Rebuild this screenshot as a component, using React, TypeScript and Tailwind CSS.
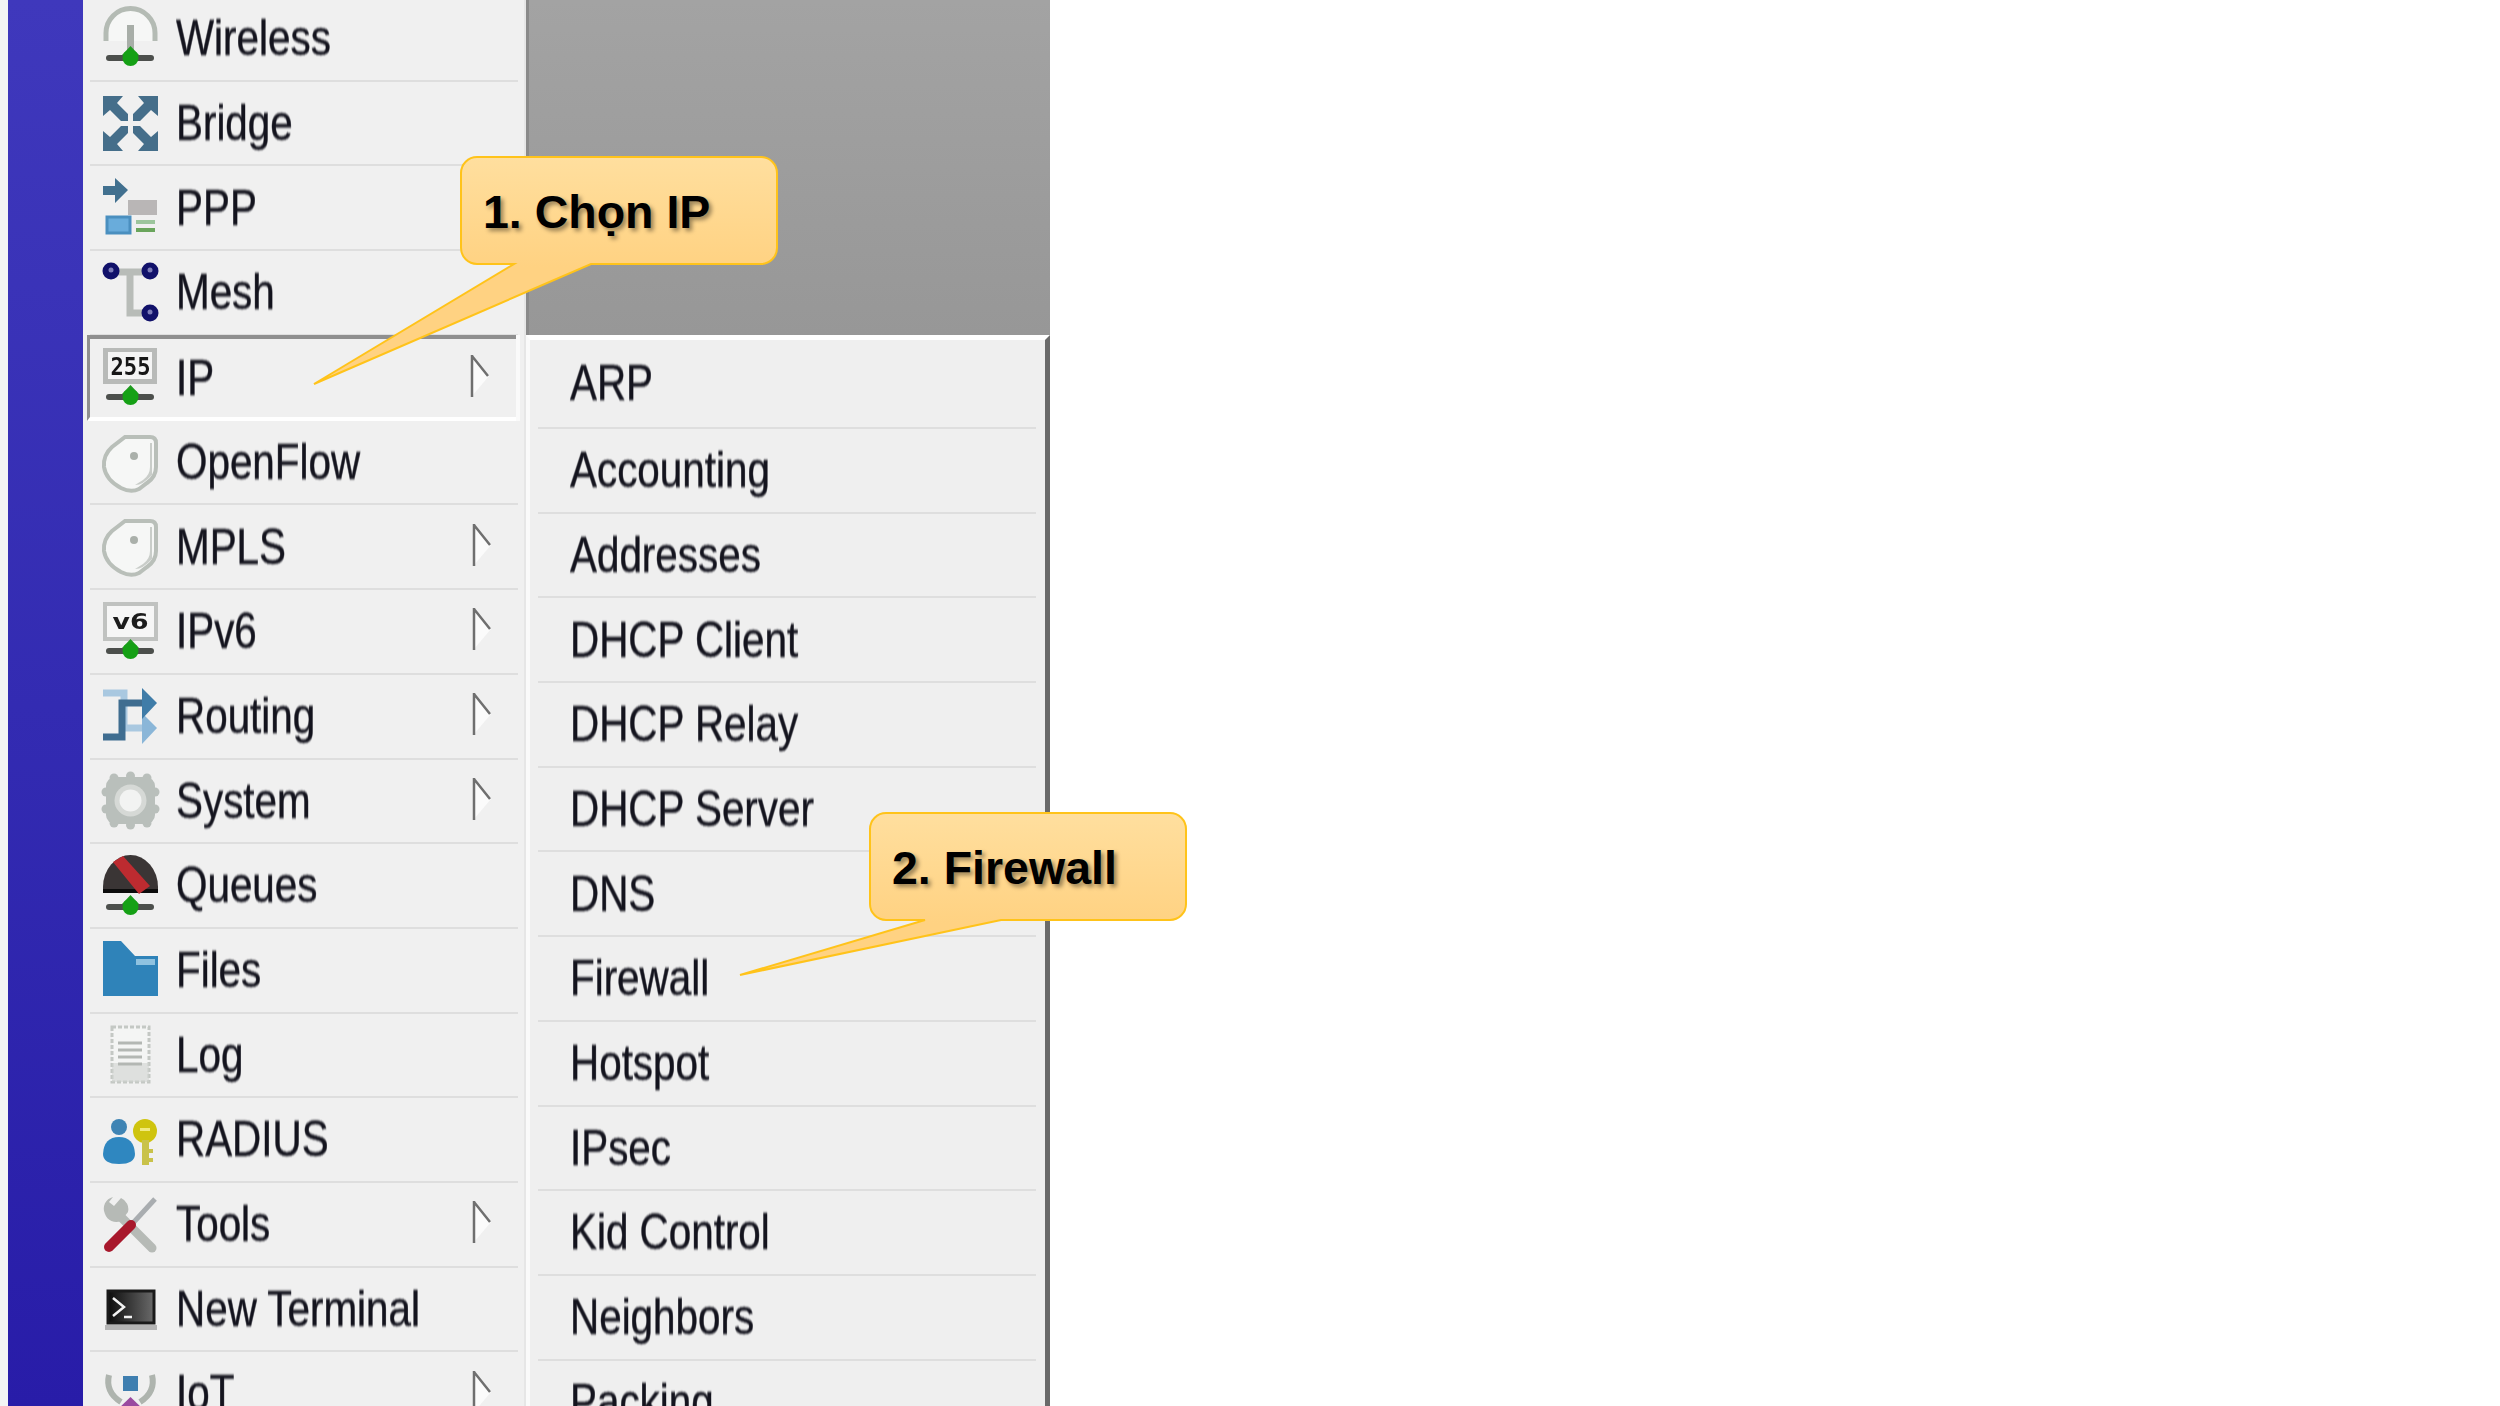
import type { ReactNode } from "react";

// shared little "network" foot under several of the icons
function NetFoot({ y }: { y: number }) {
  return (
    <>
      <rect x="3" y={y - 3} width="48" height="6" rx="3" fill="#2f332f" opacity="0.85" />
      <path d={`M27.5 ${y - 12} L36 ${y - 3} L19 ${y - 3} Z`} fill="#1f9a1f" />
      <circle cx="27.5" cy={y} r="8" fill="#15a015" />
    </>
  );
}

function Icon({ children }: { children: ReactNode }) {
  return (
    <svg viewBox="0 0 55 55" className="w-[55px] h-[55px] shrink-0 overflow-visible blur-[0.6px]">
      {children}
    </svg>
  );
}

const shield = "M22 2 H47 Q53 2 53 8 V32 Q53 42 44 48 L36 54 Q28 58 18 53 Q3 45 1 32 Q0 20 9 12 Z";

function ShieldIcon() {
  return (
    <Icon>
      <path d={shield} fill="#f6f7f6" stroke="#b9bfb9" strokeWidth="4" />
      <path d="M47 8 V32 Q47 40 40 45 L32 50 Q40 50 49 40 V8 Z" fill="#c9cdc9" />
      <circle cx="31" cy="21" r="4" fill="#aab0aa" />
    </Icon>
  );
}

function Arrow() {
  return <polygon points="0,0 20,0 14,7 25,18 25,25 18,25 7,14 0,20" fill="#456e8a" />;
}

const gearBumps = [
  [11, 5],
  [27.5, 3],
  [44, 5],
  [11, 50],
  [27.5, 52],
  [44, 50],
  [3, 19],
  [3, 36],
  [52, 19],
  [52, 36],
];

const icons: Record<string, ReactNode> = {
  Wireless: (
    <Icon>
      <path d="M3 30 V22 A24.5 24.5 0 0 1 52 22 V30" fill="#f6f7f6" stroke="#b4bbb4" strokeWidth="5" />
      <rect x="24" y="14" width="7" height="30" fill="#a8aea8" />
      <NetFoot y={47} />
    </Icon>
  ),
  Bridge: (
    <Icon>
      <Arrow />
      <g transform="translate(55 0) scale(-1 1)">
        <Arrow />
      </g>
      <g transform="translate(0 55) scale(1 -1)">
        <Arrow />
      </g>
      <g transform="translate(55 55) scale(-1 -1)">
        <Arrow />
      </g>
    </Icon>
  ),
  PPP: (
    <Icon>
      <path d="M0 6 H12 V-2 L25 10 L12 23 V15 H0 Z" fill="#41708f" />
      <rect x="4" y="37" width="23" height="16" fill="#69acdb" stroke="#4a8fbf" strokeWidth="3" />
      <rect x="25" y="20" width="29" height="15" fill="#b9b6b6" />
      <rect x="33" y="40" width="19" height="4" fill="#9cc59c" />
      <rect x="33" y="48" width="19" height="4" fill="#6aa55c" />
    </Icon>
  ),
  Mesh: (
    <Icon>
      <path d="M8 7 H47 M27 7 V48 H47" fill="none" stroke="#b8bcb8" strokeWidth="7" />
      <circle cx="8" cy="6" r="8.5" fill="#11116a" />
      <circle cx="47" cy="6" r="8.5" fill="#11116a" />
      <circle cx="47" cy="48" r="8.5" fill="#11116a" />
      <circle cx="8" cy="5" r="2.5" fill="#7c7cb8" />
      <circle cx="47" cy="5" r="2.5" fill="#7c7cb8" />
      <circle cx="47" cy="47" r="2.5" fill="#7c7cb8" />
    </Icon>
  ),
  IP: (
    <Icon>
      <rect x="0" y="-2" width="54" height="36" fill="#b8bab8" />
      <rect x="5" y="2" width="44" height="27" fill="#f4f4f4" />
      <text x="27.5" y="25" textAnchor="middle" fontSize="24" fontWeight="700" fontFamily="'DejaVu Sans Mono', monospace" fill="#161616" textLength="40" lengthAdjust="spacingAndGlyphs">
        255
      </text>
      <NetFoot y={47} />
    </Icon>
  ),
  OpenFlow: <ShieldIcon />,
  MPLS: <ShieldIcon />,
  IPv6: (
    <Icon>
      <rect x="2" y="0" width="51" height="35" fill="#f6f6f6" stroke="#c0c2c0" strokeWidth="4" />
      <text x="27.5" y="25" textAnchor="middle" fontSize="22" fontWeight="700" fontFamily="'DejaVu Sans', sans-serif" fill="#1c1c1c" textLength="36" lengthAdjust="spacingAndGlyphs">
        v6
      </text>
      <NetFoot y={47} />
    </Icon>
  ),
  Routing: (
    <Icon>
      <path d="M0 4 H21 V39 H42" fill="none" stroke="#a9c8e0" strokeWidth="7" />
      <path d="M39 24 L54 39 L39 55 Z" fill="#8ab6d8" />
      <path d="M0 48 H19 V14 H42" fill="none" stroke="#3f6d90" strokeWidth="7" />
      <path d="M39 -1 L54 14 L39 30 Z" fill="#3f7ca8" />
    </Icon>
  ),
  System: (
    <Icon>
      {gearBumps.map(([cx, cy]) => (
        <circle key={`${cx}-${cy}`} cx={cx} cy={cy} r="4.5" fill="#b9bfbb" />
      ))}
      <rect x="3" y="4" width="49" height="47" rx="9" fill="#b9bfbb" />
      <circle cx="27.5" cy="27.5" r="16" fill="#d6d9d6" />
      <circle cx="27.5" cy="27.5" r="11" fill="#f2f3f2" />
    </Icon>
  ),
  Queues: (
    <Icon>
      <path d="M0 35 V29 A27.5 32 0 0 1 55 29 V35 Z" fill="#3a3535" />
      <rect x="0" y="31" width="55" height="4" fill="#0c0c0c" />
      <path d="M10 4 L20 -2 L47 28 L36 36 Z" fill="#bd2b30" />
      <NetFoot y={49} />
    </Icon>
  ),
  Files: (
    <Icon>
      <path d="M0 -2 H18 L32 13 H55 V53 H0 Z" fill="#2f83b9" />
      <path d="M33 16 H52 V22 H33 Z" fill="#8fc2e0" />
    </Icon>
  ),
  Log: (
    <Icon>
      <path d="M9 0 H46 V55 H9 Z" fill="#f4f5f4" stroke="#c4c8c4" strokeWidth="3" strokeDasharray="4 2" />
      <path d="M9 36 H46 V55 H9 Z" fill="#cfd2cf" opacity="0.6" />
      <path d="M15 16 H39 M15 23 H39 M15 30 H39 M15 37 H39" stroke="#b3b7b3" strokeWidth="3" />
    </Icon>
  ),
  RADIUS: (
    <Icon>
      <circle cx="16" cy="15" r="8" fill="#3f84b4" />
      <path d="M0 42 Q1 25 16 25 Q31 25 32 42 Q32 52 16 52 Q0 52 0 42 Z" fill="#2f87c0" />
      <circle cx="42" cy="19" r="12" fill="#cfc40f" />
      <rect x="37" y="16" width="10" height="3" fill="#f0ea80" />
      <path d="M39 28 H46 V53 H39 Z M46 37 H50 V41 H46 Z M46 46 H50 V50 H46 Z" fill="#c9c24a" />
    </Icon>
  ),
  Tools: (
    <Icon>
      <path d="M16 18 L49 51" stroke="#b6bab6" strokeWidth="9" strokeLinecap="round" />
      <path d="M10 0 A12 12 0 0 0 2 17 A12 12 0 0 0 18 24 L25 15 A12 12 0 0 0 18 1 L11 9 L6 5 Z" fill="#b6bab6" />
      <path d="M52 2 L30 26" stroke="#a9adb0" strokeWidth="5" />
      <path d="M28 28 L6 50" stroke="#a8182c" strokeWidth="10" strokeLinecap="round" />
    </Icon>
  ),
  "New Terminal": (
    <Icon>
      <defs>
        <linearGradient id="term-screen" x1="0" y1="0" x2="1" y2="0">
          <stop offset="0" stopColor="#0c0c0c" />
          <stop offset="1" stopColor="#6a6a6a" />
        </linearGradient>
      </defs>
      <rect x="5" y="10" width="46" height="32" fill="url(#term-screen)" stroke="#1a1a1a" strokeWidth="3" />
      <rect x="2" y="44" width="52" height="5" fill="#b4b4b4" />
      <path d="M10 17 L21 26 L10 35 M21 36 H29" fill="none" stroke="#f2f2f2" strokeWidth="2.5" />
    </Icon>
  ),
  IoT: (
    <Icon>
      <path d="M6 9 Q2 26 18 36 M49 9 Q53 26 37 36" fill="none" stroke="#aeb4ae" strokeWidth="6" />
      <rect x="20" y="10" width="15" height="15" fill="#3f7fb0" />
      <path d="M27.5 31 L42 45 L27.5 59 L13 45 Z" fill="#9a4aa0" />
    </Icon>
  ),
};

const mainItems = [
  { name: "Wireless" },
  { name: "Bridge" },
  { name: "PPP" },
  { name: "Mesh" },
  { name: "IP", sub: true, active: true },
  { name: "OpenFlow" },
  { name: "MPLS", sub: true },
  { name: "IPv6", sub: true },
  { name: "Routing", sub: true },
  { name: "System", sub: true },
  { name: "Queues" },
  { name: "Files" },
  { name: "Log" },
  { name: "RADIUS" },
  { name: "Tools", sub: true },
  { name: "New Terminal" },
  { name: "IoT", sub: true },
];

const subItems = [
  "ARP",
  "Accounting",
  "Addresses",
  "DHCP Client",
  "DHCP Relay",
  "DHCP Server",
  "DNS",
  "Firewall",
  "Hotspot",
  "IPsec",
  "Kid Control",
  "Neighbors",
  "Packing",
];

function Label({ children }: { children: string }) {
  return (
    <span className="inline-block scale-y-[1.25] blur-[0.7px] text-[40.4px] leading-none text-[#14141e] whitespace-nowrap [-webkit-text-stroke:0.4px_#14141e]">
      {children}
    </span>
  );
}

function SubArrow() {
  return (
    <svg viewBox="0 0 22 44" className="w-[22px] h-[44px] ml-auto mr-[25px] -translate-y-[2px] blur-[0.4px]">
      <path d="M3 2 L20 22 L3 42 Z" fill="#fbfbfb" />
      <path d="M3 1 V43 M3 2 L19 22" fill="none" stroke="#6f6f6f" strokeWidth="2.5" />
    </svg>
  );
}

function Callout({ className, path, id, label }: { className: string; path: string; id: string; label: string }) {
  return (
    <div className={className}>
      <svg className="absolute inset-0 w-full h-full">
        <defs>
          <linearGradient id={id} gradientUnits="userSpaceOnUse" x1="0" y1="0" x2="0" y2="112">
            <stop offset="0" stopColor="#ffdf9f" />
            <stop offset="1" stopColor="#ffd282" />
          </linearGradient>
        </defs>
        <path d={path} fill={`url(#${id})`} stroke="#ffc31a" strokeWidth="2" />
      </svg>
      <span className="absolute top-[27px] text-[46.5px] leading-[60px] font-bold text-black whitespace-nowrap [text-shadow:3px_3px_4px_rgba(0,0,0,0.4)]">
        {label}
      </span>
    </div>
  );
}

export default function App() {
  return (
    <div className="relative w-[2500px] h-[1406px] overflow-hidden bg-white flex font-['Liberation_Sans',Arial,sans-serif]">
      {/* Blue strip */}
      <div className="w-[8px] bg-[#f3f4f4]" />
      <div className="w-[75px] bg-gradient-to-b from-[#3f38bc] to-[#281ca8]" />

      {/* Main menu */}
      <div className="w-[443px] bg-[#f0f0f0] pl-[2px] border-r-2 border-[#e6e6e6]">
        <div className="-mt-[3px]">
          {mainItems.map((item) =>
            item.active ? (
              <div
                key={item.name}
                className="h-[86px] -mt-[1px] flex items-center pl-[13px] ml-[2px] mr-[8px] border-t-[4px] border-l-[3px] border-[#8f8f8f] border-b-[4px] border-b-white shadow-[4px_0_0_#fafafa]"
              >
                <div className="flex items-center gap-[18px]">
                  {icons[item.name]}
                  <Label>{item.name}</Label>
                </div>
                <SubArrow />
              </div>
            ) : (
              <div
                key={item.name}
                className="h-[84.7px] flex items-center pl-[13px] ml-[5px] border-b-2 border-[#dedede] mr-[6px]"
              >
                <div className="flex items-center gap-[18px]">
                  {icons[item.name]}
                  <Label>{item.name}</Label>
                </div>
                {item.sub && <SubArrow />}
              </div>
            ),
          )}
        </div>
      </div>

      {/* Right column: empty grey desktop above the IP submenu */}
      <div className="w-[524px] flex flex-col">
        <div className="h-[335px] shrink-0 bg-gradient-to-b from-[#a3a3a3] to-[#979797] border-l-[3px] border-l-[#8a8a8a]" />
        <div className="flex-1 bg-[#efefef] border-t-[5px] border-t-white border-l-[4px] border-l-[#fafafa] border-r-[5px] border-r-[#6a6a6a] pl-[8px] pr-[9px]">
          {subItems.map((name) => (
            <div key={name} className="h-[84.7px] first:h-[89px] flex items-center pl-[32px] border-b-2 border-[#dedede]">
              <Label>{name}</Label>
            </div>
          ))}
        </div>
      </div>

      {/* Callouts */}
      <Callout
        id="callout-ip"
        className="absolute left-[310px] top-[155px] w-[470px] h-[232px] [&>span]:left-[173px]"
        path="M167 2 H451 A16 16 0 0 1 467 18 V93 A16 16 0 0 1 451 109 H281 L4 229 L204 109 H167 A16 16 0 0 1 151 93 V18 A16 16 0 0 1 167 2 Z"
        label="1. Chọn IP"
      />
      <Callout
        id="callout-firewall"
        className="absolute left-[736px] top-[811px] w-[452px] h-[168px] [&>span]:left-[156px]"
        path="M150 2 H434 A16 16 0 0 1 450 18 V93 A16 16 0 0 1 434 109 H265 L4 164 L189 109 H150 A16 16 0 0 1 134 93 V18 A16 16 0 0 1 150 2 Z"
        label="2. Firewall"
      />
    </div>
  );
}
